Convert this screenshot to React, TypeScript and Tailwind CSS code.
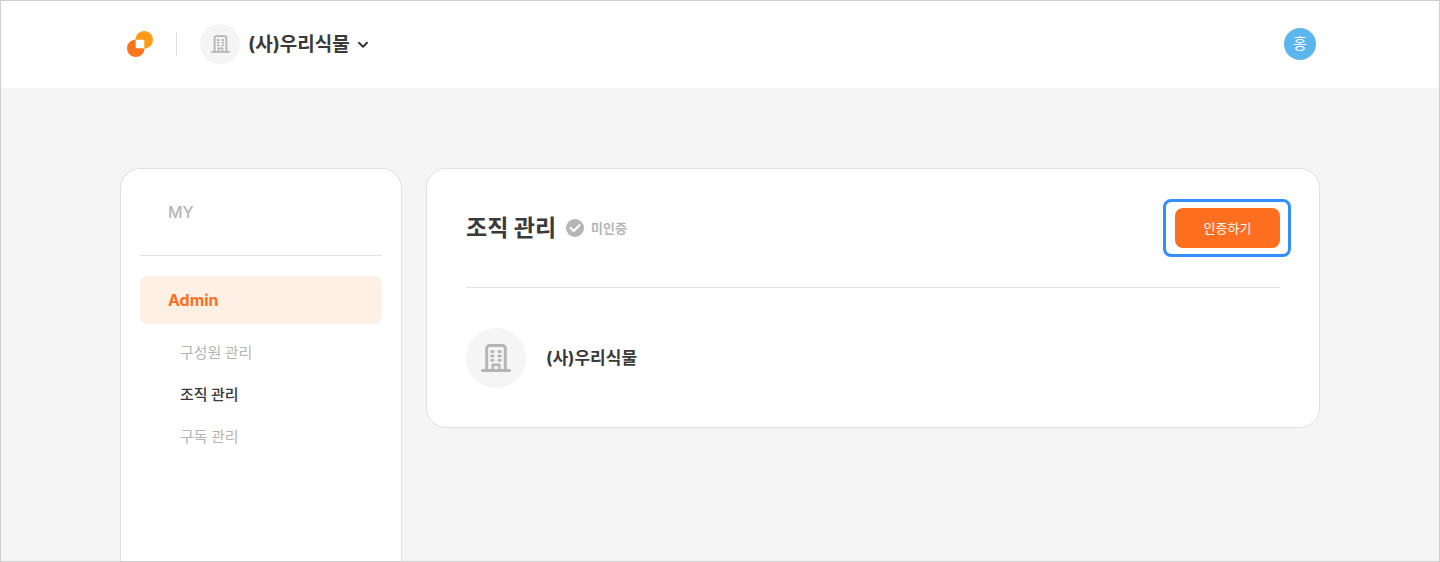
import React from 'react';

type MenuItem = { label: string; active?: boolean };

const adminMenu: MenuItem[] = [
    { label: '구성원 관리' },
    { label: '조직 관리', active: true },
    { label: '구독 관리' },
];

const ORG_NAME = '(사)우리식물';

function Logo() {
    return (
        <svg viewBox="0 0 26 26" className="w-[26px] h-[26px]" aria-hidden="true">
            <defs>
                <linearGradient id="logo-left" x1="0" y1="0" x2="1" y2="1">
                    <stop offset="0" stopColor="#ff6f1c" />
                    <stop offset="1" stopColor="#fa7a1e" />
                </linearGradient>
            </defs>
            <circle cx="8.8" cy="17.2" r="8.8" fill="url(#logo-left)" />
            <circle cx="17.2" cy="8.8" r="8.8" fill="#ff9a17" />
            <rect x="8.7" y="8.7" width="8.6" height="8.6" rx="0.6" fill="#fff" />
        </svg>
    );
}

function BuildingIcon({ className }: { className: string }) {
    return (
        <svg viewBox="0 0 30 28" fill="none" stroke="#b5b5b5" strokeLinecap="round" className={className} aria-hidden="true">
            <path d="M1.5 26.5h27" strokeWidth="3" />
            <path d="M5.7 26V4.4c0-1.6 1.3-2.9 2.9-2.9h12.8c1.6 0 2.9 1.3 2.9 2.9V26" strokeWidth="3" />
            <path d="M11.8 26v-5.3h6.4V26" strokeWidth="2.6" strokeLinejoin="round" />
            <path d="M10.6 7.7h1.6M17.8 7.7h1.6M10.6 12h1.6M17.8 12h1.6M10.6 16.3h1.6M17.8 16.3h1.6" strokeWidth="2.8" />
        </svg>
    );
}

function Header() {
    return (
        <header className="h-[87px] bg-white pt-[23px]">
            <div className="max-w-[1200px] h-10 mx-auto flex items-center justify-between pl-[7px] pr-1">
                <div className="flex items-center">
                    <a href="#" aria-label="홈">
                        <Logo />
                    </a>
                    <span className="w-px h-6 ml-[23px] bg-[#e1e1e1]" />
                    <button type="button" className="flex items-center ml-[23px] cursor-pointer">
                        <span className="w-10 h-10 rounded-full bg-[#f5f5f5] flex items-center justify-center">
                            <BuildingIcon className="w-[19px] h-[18px]" />
                        </span>
                        <span className="ml-2 text-[19px] leading-[29px] font-bold">{ORG_NAME}</span>
                        <svg viewBox="0 0 12 12" fill="none" stroke="#3a3a3a" strokeWidth="2" strokeLinecap="round" strokeLinejoin="round" className="w-3 h-3 ml-[7px]" aria-hidden="true">
                            <path d="M2 4.8l4 4 4-4" />
                        </svg>
                    </button>
                </div>
                <button type="button" className="w-8 h-8 rounded-full bg-[#5ab6ec] text-white text-[15px] leading-5 cursor-pointer">
                    홍
                </button>
            </div>
        </header>
    );
}

function Sidebar() {
    return (
        <nav className="w-[282px] shrink-0 bg-white border border-b-0 border-[#e1e1e1] rounded-t-[20px] px-[19px] pt-[19px]">
            <a href="#" className="flex items-center h-12 px-7 text-[16px] leading-6 font-medium text-[#b5b5b5]">
                MY
            </a>
            <hr className="mt-[19px] border-[#e1e1e1]" />
            <a href="#" className="flex items-center h-12 mt-5 px-7 rounded-lg bg-[#fff0e6] text-[16px] leading-6 font-bold text-[#ff6f1f]">
                Admin
            </a>
            <ul className="flex flex-col gap-0.5 mt-2 font-['Noto_Sans_CJK_KR',sans-serif]">
                {adminMenu.map((item) => (
                    <li key={item.label}>
                        <a
                            href="#"
                            className={`flex items-center h-10 px-10 text-[15px] leading-6 ${item.active ? 'font-medium text-[#3a3a3a]' : 'text-[#b5b5b5]'}`}
                        >
                            {item.label}
                        </a>
                    </li>
                ))}
            </ul>
        </nav>
    );
}

function OrgCard() {
    return (
        <section className="flex-1 self-start bg-white border border-[#e1e1e1] rounded-[20px] p-[39px]">
            <div className="flex items-center justify-between h-10">
                <div className="flex items-center">
                    <h1 className="text-[23px] leading-[35px] font-bold">조직 관리</h1>
                    <svg viewBox="0 0 18 18" className="w-[18px] h-[18px] ml-2.5" aria-hidden="true">
                        <circle cx="9" cy="9" r="9" fill="#b5b5b5" />
                        <path d="M4.7 9l3 3 5.7-5.7" fill="none" stroke="#fff" strokeWidth="2.3" strokeLinecap="round" strokeLinejoin="round" />
                    </svg>
                    <span className="ml-[7px] text-[13px] leading-5 font-bold text-[#b5b5b5]">미인증</span>
                </div>
                <div className="relative">
                    <button type="button" className="block w-[105px] h-10 rounded-lg bg-[#ff6f1f] text-white text-[13px] leading-5 cursor-pointer">
                        인증하기
                    </button>
                    <span className="absolute -left-3 -right-[11px] -inset-y-[9px] border-3 border-[#338fff] rounded-lg pointer-events-none" />
                </div>
            </div>
            <hr className="mt-[39px] border-[#e1e1e1]" />
            <div className="flex items-center mt-10">
                <span className="w-[60px] h-[60px] rounded-full bg-[#f5f5f5] flex items-center justify-center">
                    <BuildingIcon className="w-[30px] h-[28px]" />
                </span>
                <span className="ml-5 text-[17px] leading-6 font-bold">{ORG_NAME}</span>
            </div>
        </section>
    );
}

export default function App() {
    return (
        <div className="min-h-screen flex flex-col border border-[#cfcfcf] bg-[#f5f5f5] text-[#3a3a3a] font-[Inter,'Noto_Sans_CJK_KR',sans-serif]">
            <Header />
            <main className="flex-1 flex gap-6 w-full max-w-[1200px] mx-auto pt-20">
                <Sidebar />
                <OrgCard />
            </main>
        </div>
    );
}
